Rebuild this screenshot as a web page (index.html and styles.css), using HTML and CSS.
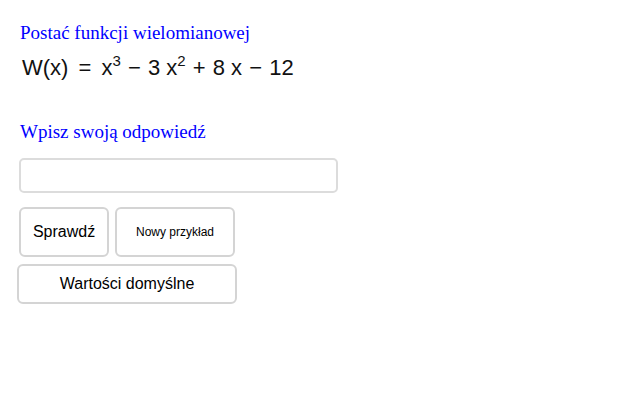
FILE: index.html
```html
<!DOCTYPE html>
<html lang="pl">
<head>
<meta charset="utf-8">
<link rel="stylesheet" href="styles.css">
</head>
<body>
<div class="applet">
  <div class="label">Postać funkcji wielomianowej</div>
  <div class="formula">W(x) <span class="eq">=</span> x<sup>3</sup> <span class="op">−</span> 3 x<sup>2</sup> <span class="op">+</span> 8 x <span class="op">−</span> 12</div>
  <div class="label second">Wpisz swoją odpowiedź</div>
  <div class="answer"></div>
  <div class="row">
    <button class="btn check">Sprawdź</button>
    <button class="btn next">Nowy przykład</button>
  </div>
  <button class="btn reset">Wartości domyślne</button>
</div>
</body>
</html>
```

FILE: styles.css
```css
html, body {
  margin: 0;
  padding: 0;
  background: #ffffff;
}
.applet {
  width: 640px;
  height: 400px;
  display: flex;
  flex-direction: column;
  align-items: flex-start;
  padding: 0 0 0 19px;
  box-sizing: border-box;
}
.label {
  font-family: "Liberation Serif", "Times New Roman", serif;
  font-size: 19px;
  line-height: 22px;
  color: #0000ff;
  margin-left: 1px;
}
.label:first-child {
  margin-top: 22px;
}
.formula {
  font-family: "Liberation Sans", Arial, sans-serif;
  font-size: 22px;
  line-height: 28px;
  color: #111;
  margin: 10px 0 0 3px;
  white-space: nowrap;
}
.formula sup {
  font-size: 15px;
  line-height: 0;
  vertical-align: 9px;
}
.formula .eq {
  margin: 0 4px;
}
.formula .op {
  margin: 0 1px;
}
.label.second {
  margin-top: 39px;
}
.answer {
  width: 319px;
  height: 35px;
  box-sizing: border-box;
  border: 2px solid #dcdcdc;
  border-radius: 5px;
  margin-top: 15px;
  background: #fff;
}
.row {
  display: flex;
  gap: 6px;
  margin-top: 14px;
}
.btn {
  font-family: "Liberation Sans", Arial, sans-serif;
  color: #000;
  background: #fff;
  border: 2px solid #d4d4d4;
  border-radius: 6px;
  box-sizing: border-box;
  padding: 0;
  margin: 0;
}
.check {
  width: 90px;
  height: 50px;
  font-size: 16px;
}
.next {
  width: 120px;
  height: 50px;
  font-size: 12px;
}
.reset {
  width: 220px;
  height: 40px;
  font-size: 16px;
  margin: 7px 0 0 -2px;
}
```
